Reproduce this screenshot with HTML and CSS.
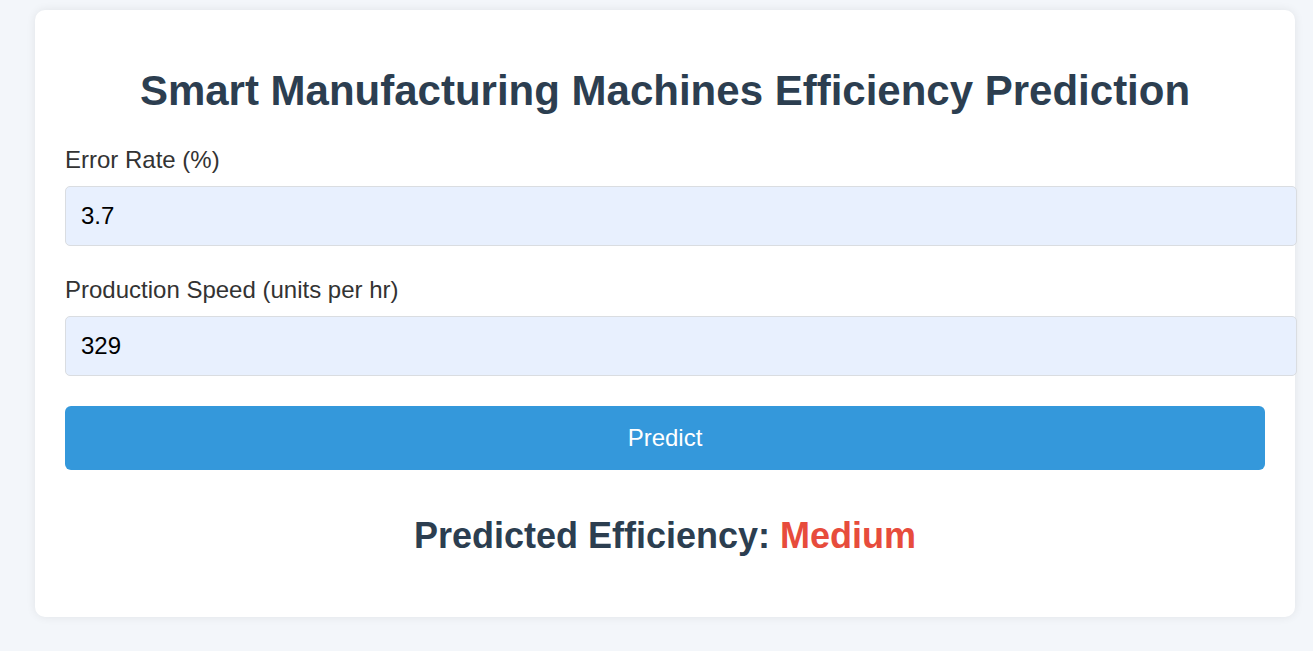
FILE: index.html
```html
<!DOCTYPE html>
<html lang="en">
<head>
<meta charset="utf-8">
<title>Smart Manufacturing Machines Efficiency Prediction</title>
<link rel="stylesheet" href="styles.css">
</head>
<body>
  <div class="card">
    <h1 class="title">Smart Manufacturing Machines Efficiency Prediction</h1>
    <form class="form">
      <div class="field">
        <label class="label" for="error-rate">Error Rate (%)</label>
        <input class="input" id="error-rate" type="text" value="3.7">
      </div>
      <div class="field">
        <label class="label" for="speed">Production Speed (units per hr)</label>
        <input class="input" id="speed" type="text" value="329">
      </div>
      <button class="button" type="button">Predict</button>
    </form>
    <h2 class="result">Predicted Efficiency: <span class="result-value">Medium</span></h2>
  </div>
</body>
</html>
```

FILE: styles.css
```css
html, body {
  margin: 0;
  background: #f3f6fa;
}

body {
  padding: 10px 18px 20px 35px;
  font-family: "Liberation Sans", Arial, sans-serif;
}

.card {
  width: 1200px;
  padding: 30px;
  background: #ffffff;
  border-radius: 10px;
  box-shadow: 0 0 10px rgba(0, 0, 0, 0.08);
}

.title {
  margin: 27px 0 31px;
  font-size: 42px;
  font-weight: bold;
  color: #2c3e50;
  text-align: center;
  line-height: normal;
}

.form {
  display: flex;
  flex-direction: column;
}

.field {
  margin-bottom: 30px;
}

.label {
  display: block;
  margin-bottom: 12px;
  font-size: 24px;
  color: #333333;
  line-height: normal;
}

.input {
  display: block;
  width: 100%;
  box-sizing: content-box;
  padding: 15px;
  margin: 0;
  font-family: "Liberation Sans", Arial, sans-serif;
  font-size: 24px;
  line-height: normal;
  color: #000000;
  background: #e8f0fe;
  border: 1px solid #dadde1;
  border-radius: 5px;
  outline: none;
}

.button {
  width: 100%;
  height: 64px;
  margin: 0;
  padding: 0;
  font-family: "Liberation Sans", Arial, sans-serif;
  font-size: 24px;
  color: #ffffff;
  background: #3498db;
  border: none;
  border-radius: 6px;
  cursor: pointer;
}

.result {
  margin: 45px 0 30px;
  font-size: 36px;
  font-weight: bold;
  color: #2c3e50;
  text-align: center;
  line-height: normal;
}

.result-value {
  color: #e74c3c;
}
```
